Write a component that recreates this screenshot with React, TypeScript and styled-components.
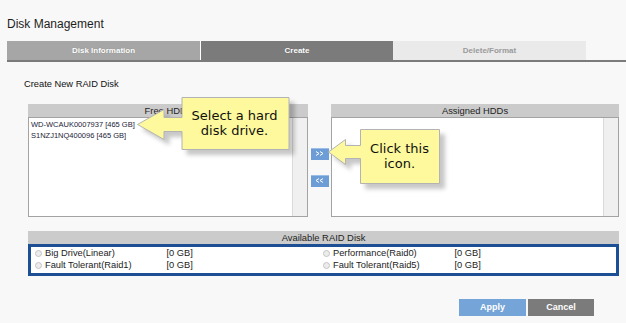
import styled, { createGlobalStyle } from "styled-components";

const GlobalStyle = createGlobalStyle`
  body {
    margin: 0;
    background: #f8f8f8;
    font-family: "Liberation Sans", Arial, sans-serif;
    color: #222;
  }
`;

const Page = styled.div`
  position: relative;
  width: 626px;
  height: 323px;
  padding-left: 7px;
  box-sizing: border-box;
  overflow: hidden;
`;

const Title = styled.h1`
  margin: 17px 0 0;
  font-size: 12px;
  line-height: 14px;
  font-weight: normal;
  color: #1e1e1e;
`;

const Tabs = styled.div`
  display: flex;
  height: 19px;
  margin-top: 10px;
  border-bottom: 2px solid #7b7b7b;
`;

const Tab = styled.div<{ $state: "done" | "active" | "idle" }>`
  width: 193px;
  box-sizing: border-box;
  display: flex;
  align-items: center;
  justify-content: center;
  font-size: 8px;
  font-weight: bold;
  background: ${(p) =>
    p.$state === "active" ? "#7b7b7b" : p.$state === "done" ? "#a6a6a6" : "#eaeaea"};
  color: ${(p) => (p.$state === "idle" ? "#9a9a9a" : "#fff")};
  border-left: ${(p) => (p.$state === "active" ? "1px solid #fff" : "none")};
  text-shadow: ${(p) => (p.$state === "idle" ? "none" : "0 0 1px rgba(0,0,0,0.25)")};
`;

const Content = styled.div`
  padding: 0 7px 0 21px;
`;

const SubTitle = styled.div`
  margin: 16px 0 0 -4px;
  font-size: 9.3px;
  line-height: 12px;
  color: #111;
`;

const DualList = styled.div`
  display: grid;
  grid-template-columns: 280px 23px 288px;
  margin-top: 14px;
`;

const PanelHeader = styled.div<{ $h?: number }>`
  height: ${(p) => p.$h ?? 13}px;
  background: #cbcbcb;
  font-size: 9.4px;
  line-height: ${(p) => p.$h ?? 13}px;
  text-align: center;
  color: #1e1e1e;
`;

const ListBox = styled.div`
  height: 100px;
  box-sizing: border-box;
  border: 1px solid #a3a3a3;
  background: #fff;
  display: flex;
`;

const ListItems = styled.div`
  flex: 1;
  padding: 1px 2px;
`;

const ListItem = styled.div`
  font-size: 7.5px;
  line-height: 11px;
  color: #1c1c38;
  white-space: nowrap;
`;

const ScrollTrack = styled.div`
  width: 14px;
  background: #f0f0f0;
  border-left: 1px solid #dadada;
`;

const MoveColumn = styled.div`
  display: flex;
  flex-direction: column;
  align-items: center;
  justify-content: center;
  gap: 15px;
  padding-top: 13px;
`;

const MoveButton = styled.button`
  width: 18px;
  height: 12px;
  padding: 0;
  border: none;
  background: #6c9dd7;
  box-shadow: inset 0 1px 0 #9bbde6;
  display: flex;
  align-items: center;
  justify-content: center;
`;

const RaidBox = styled.div`
  border: 3px solid #1c4f93;
  background: #fff;
  display: grid;
  grid-template-columns: 288px 1fr;
  padding: 0 0 1px;
`;

const RaidOption = styled.label`
  display: flex;
  align-items: center;
  height: 12.3px;
  padding-left: 4px;
  font-size: 9.3px;
  color: #222;
  white-space: nowrap;
`;

const Radio = styled.span`
  width: 7px;
  height: 7px;
  box-sizing: border-box;
  border-radius: 50%;
  border: 1px solid #c4c4c4;
  background: #ececec;
  margin-right: 3px;
`;

const OptionName = styled.span`
  width: 121.5px;
`;

const Actions = styled.div`
  display: flex;
  justify-content: flex-end;
  gap: 2px;
  margin-top: 23px;
  padding-right: 25px;
`;

const ActionButton = styled.button<{ $primary?: boolean }>`
  height: 17px;
  width: ${(p) => (p.$primary ? 67 : 66)}px;
  border: none;
  padding: 0;
  background: ${(p) => (p.$primary ? "#75a4d8" : "#7b7b7b")};
  color: #fff;
  font-family: "Liberation Sans", Arial, sans-serif;
  font-size: 9px;
  font-weight: bold;
`;

const CalloutShape = styled.svg`
  position: absolute;
  overflow: visible;
  filter: drop-shadow(5px 5px 2px rgba(0, 0, 0, 0.22));
`;

const CalloutText = styled.div`
  position: absolute;
  display: flex;
  flex-direction: column;
  align-items: center;
  justify-content: center;
  font-family: "DejaVu Sans", Verdana, sans-serif;
  font-size: 13px;
  line-height: 15px;
  color: #111;
  text-align: center;
`;

interface CalloutProps {
  left: number;
  top: number;
  width: number;
  height: number;
  tipX: number;
  tipY: number;
  barbX: number;
  headHalf: number;
  shaftHalf: number;
  lines: string[];
}

function Callout({ left, top, width, height, tipX, tipY, barbX, headHalf, shaftHalf, lines }: CalloutProps) {
  const ox = tipX - 2;
  const oy = Math.min(top, tipY - headHalf) - 2;
  const pt = (x: number, y: number) => `${x - ox + 0.5},${y - oy + 0.5}`;
  const r = left + width;
  const b = top + height;
  const points = [
    pt(tipX, tipY),
    pt(barbX, tipY - headHalf),
    pt(barbX, tipY - shaftHalf),
    pt(left, tipY - shaftHalf),
    pt(left, top),
    pt(r, top),
    pt(r, b),
    pt(left, b),
    pt(left, tipY + shaftHalf),
    pt(barbX, tipY + shaftHalf),
    pt(barbX, tipY + headHalf),
  ].join(" ");
  return (
    <>
      <CalloutShape
        style={{ left: ox, top: oy }}
        width={r - ox + 4}
        height={b - oy + 4}
      >
        <polygon points={points} fill="#fdf99c" stroke="#b3b3b3" strokeWidth="1" />
      </CalloutShape>
      <CalloutText style={{ left, top, width, height }}>
        {lines.map((l) => (
          <div key={l}>{l}</div>
        ))}
      </CalloutText>
    </>
  );
}

function Chevrons({ dir }: { dir: "right" | "left" }) {
  const d =
    dir === "right"
      ? "M1 0.5 L4 2.5 L1 4.5 M5 0.5 L8 2.5 L5 4.5"
      : "M4 0.5 L1 2.5 L4 4.5 M8 0.5 L5 2.5 L8 4.5";
  return (
    <svg width="9" height="5" viewBox="0 0 9 5">
      <path d={d} stroke="#fff" strokeWidth="1" fill="none" />
    </svg>
  );
}

const raidOptions = [
  "Big Drive(Linear)",
  "Performance(Raid0)",
  "Fault Tolerant(Raid1)",
  "Fault Tolerant(Raid5)",
];

export default function App() {
  return (
    <>
      <GlobalStyle />
      <Page>
        <Title>Disk Management</Title>
        <Tabs>
          <Tab $state="done">Disk Information</Tab>
          <Tab $state="active">Create</Tab>
          <Tab $state="idle">Delete/Format</Tab>
        </Tabs>
        <Content>
          <SubTitle>Create New RAID Disk</SubTitle>
          <DualList>
            <div>
              <PanelHeader>Free HDDs</PanelHeader>
              <ListBox>
                <ListItems>
                  <ListItem>WD-WCAUK0007937 [465 GB]</ListItem>
                  <ListItem>S1NZJ1NQ400096 [465 GB]</ListItem>
                </ListItems>
                <ScrollTrack />
              </ListBox>
            </div>
            <MoveColumn>
              <MoveButton aria-label="add">
                <Chevrons dir="right" />
              </MoveButton>
              <MoveButton aria-label="remove">
                <Chevrons dir="left" />
              </MoveButton>
            </MoveColumn>
            <div>
              <PanelHeader>Assigned HDDs</PanelHeader>
              <ListBox>
                <ListItems />
                <ScrollTrack />
              </ListBox>
            </div>
          </DualList>
          <div style={{ marginTop: 14 }}>
            <PanelHeader>Available RAID Disk</PanelHeader>
            <RaidBox>
              {raidOptions.map((name) => (
                <RaidOption key={name}>
                  <Radio />
                  <OptionName>{name}</OptionName>
                  <span>[0 GB]</span>
                </RaidOption>
              ))}
            </RaidBox>
          </div>
          <Actions>
            <ActionButton $primary>Apply</ActionButton>
            <ActionButton>Cancel</ActionButton>
          </Actions>
        </Content>
        <Callout
          left={181}
          top={97}
          width={107}
          height={52}
          tipX={136.5}
          tipY={124}
          barbX={163}
          headHalf={15}
          shaftHalf={7}
          lines={["Select a hard", "disk drive."]}
        />
        <Callout
          left={360}
          top={129}
          width={79}
          height={54}
          tipX={328}
          tipY={151.5}
          barbX={345}
          headHalf={12.5}
          shaftHalf={6.5}
          lines={["Click this", "icon."]}
        />
      </Page>
    </>
  );
}
